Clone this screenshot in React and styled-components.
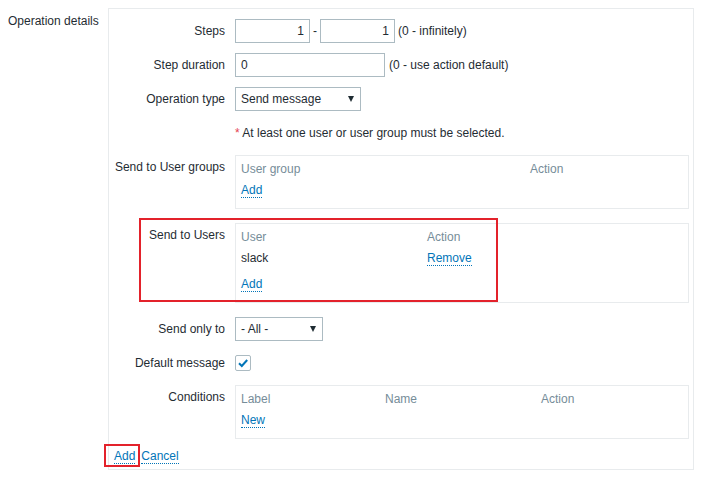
import React from "react";
import styled, { createGlobalStyle } from "styled-components";

const Global = createGlobalStyle`
  html, body { margin: 0; padding: 0; background: #ffffff; }
  body { font-family: "Liberation Sans", Arial, sans-serif; font-size: 12px; color: #1f2c33; }
  * { box-sizing: border-box; }
`;

const Page = styled.div`
  display: flex;
  align-items: flex-start;
  padding: 8px 0 0 8px;
`;

const SectionLabel = styled.div`
  width: 100px;
  padding-top: 6px;
  line-height: 14px;
`;

const Panel = styled.div`
  width: 586px;
  border: 1px solid #e8ebed;
  padding: 10px 4px 5px 0;
`;

const FormList = styled.div`
  display: flex;
  flex-direction: column;
  gap: 10px;
`;

const Row = styled.div`
  position: relative;
  display: grid;
  grid-template-columns: 116px 1fr;
  column-gap: 10px;
  align-items: ${(p) => (p.$top ? "start" : "center")};
  margin-bottom: ${(p) => p.$mb || 0}px;
  min-height: 24px;
`;

const Label = styled.div`
  text-align: right;
  line-height: 14px;
  padding-top: ${(p) => (p.$top ? 5 : 0)}px;
  white-space: nowrap;
`;

const Field = styled.div`
  display: flex;
  align-items: center;
  min-height: 24px;
`;

const Input = styled.div`
  width: ${(p) => p.$w}px;
  height: 24px;
  border: 1px solid #acbbc2;
  padding: 0 5px;
  line-height: 22px;
  text-align: ${(p) => (p.$right ? "right" : "left")};
  background: #fff;
`;

const Sep = styled.span`
  margin: 0 ${(p) => p.$r ?? 3}px 0 ${(p) => p.$l ?? 3}px;
  line-height: 14px;
`;

const Select = styled.div`
  width: ${(p) => p.$w}px;
  height: 24px;
  border: 1px solid #acbbc2;
  padding: 0 6px 0 5px;
  display: flex;
  align-items: center;
  justify-content: space-between;
  background: #fff;
`;

const Arrow = styled.span`
  width: 0;
  height: 0;
  border-left: 3.5px solid transparent;
  border-right: 3.5px solid transparent;
  border-top: 6px solid #1f2c33;
`;

const Note = styled.div`
  line-height: 14px;
`;

const Star = styled.span`
  color: #e54251;
`;

const TableBox = styled.div`
  border: 1px solid #e8ebed;
  padding: 4px 5px 6px;
`;

const TableGrid = styled.div`
  display: grid;
  grid-template-columns: ${(p) => p.$cols};
`;

const HeadCell = styled.div`
  line-height: 18px;
  color: #768d99;
`;

const BodyCell = styled.div`
  line-height: 24px;
  height: 24px;
`;

const Footer = styled.div`
  line-height: 24px;
  height: 24px;
  margin-top: ${(p) => p.$mt || 0}px;
`;

const Link = styled.a`
  color: #0275b8;
  text-decoration: none;
  border-bottom: 1px dotted #0275b8;
  cursor: pointer;
`;

const Checkbox = styled.div`
  width: 16px;
  height: 16px;
  border: 1px solid #acbbc2;
  border-radius: 2px;
  display: flex;
  align-items: center;
  justify-content: center;
  background: #fff;
`;

const Buttons = styled.div`
  display: flex;
  gap: 6px;
  padding: 10px 0 0 5px;
  line-height: 14px;
`;

const Anchor = styled.span`
  position: relative;
`;

const Highlight = styled.div`
  position: absolute;
  left: ${(p) => p.$l}px;
  top: ${(p) => p.$t}px;
  width: ${(p) => p.$w}px;
  height: ${(p) => p.$h}px;
  border: 2px solid #e3222b;
  pointer-events: none;
`;

export default function App() {
  return (
    <>
      <Global />
      <Page>
        <SectionLabel>Operation details</SectionLabel>
        <Panel>
          <FormList>
            <Row>
              <Label>Steps</Label>
              <Field>
                <Input $w={75} $right>1</Input>
                <Sep>-</Sep>
                <Input $w={75} $right>1</Input>
                <Sep $l={3}>(0 - infinitely)</Sep>
              </Field>
            </Row>
            <Row>
              <Label>Step duration</Label>
              <Field>
                <Input $w={150}>0</Input>
                <Sep $l={4}>(0 - use action default)</Sep>
              </Field>
            </Row>
            <Row>
              <Label>Operation type</Label>
              <Field>
                <Select $w={126}>
                  <span>Send message</span>
                  <Arrow />
                </Select>
              </Field>
            </Row>
            <Row>
              <div />
              <Note>
                <Star>*</Star> At least one user or user group must be selected.
              </Note>
            </Row>
            <Row $top $mb={4}>
              <Label $top>Send to User groups</Label>
              <TableBox>
                <TableGrid $cols="289px 1fr">
                  <HeadCell>User group</HeadCell>
                  <HeadCell>Action</HeadCell>
                </TableGrid>
                <Footer>
                  <Link>Add</Link>
                </Footer>
              </TableBox>
            </Row>
            <Row $top $mb={4}>
              <Label $top>Send to Users</Label>
              <TableBox>
                <TableGrid $cols="186px 1fr">
                  <HeadCell>User</HeadCell>
                  <HeadCell>Action</HeadCell>
                  <BodyCell>slack</BodyCell>
                  <BodyCell>
                    <Link>Remove</Link>
                  </BodyCell>
                </TableGrid>
                <Footer $mt={2}>
                  <Link>Add</Link>
                </Footer>
              </TableBox>
              <Highlight $l={30} $t={-5} $w={359} $h={84} />
            </Row>
            <Row>
              <Label>Send only to</Label>
              <Field>
                <Select $w={88}>
                  <span>- All -</span>
                  <Arrow />
                </Select>
              </Field>
            </Row>
            <Row>
              <Label>Default message</Label>
              <Field>
                <Checkbox>
                  <svg width="12" height="12" viewBox="0 0 12 12">
                    <path
                      d="M2 6.2 L4.8 9 L10.2 3"
                      fill="none"
                      stroke="#0275b8"
                      strokeWidth="2"
                    />
                  </svg>
                </Checkbox>
              </Field>
            </Row>
            <Row $top>
              <Label $top>Conditions</Label>
              <TableBox>
                <TableGrid $cols="144px 156px 1fr">
                  <HeadCell>Label</HeadCell>
                  <HeadCell>Name</HeadCell>
                  <HeadCell>Action</HeadCell>
                </TableGrid>
                <Footer>
                  <Link>New</Link>
                </Footer>
              </TableBox>
            </Row>
          </FormList>
          <Buttons>
            <Anchor>
              <Link>Add</Link>
              <Highlight $l={-10} $t={-5} $w={36} $h={23} />
            </Anchor>
            <Link>Cancel</Link>
          </Buttons>
        </Panel>
      </Page>
    </>
  );
}
